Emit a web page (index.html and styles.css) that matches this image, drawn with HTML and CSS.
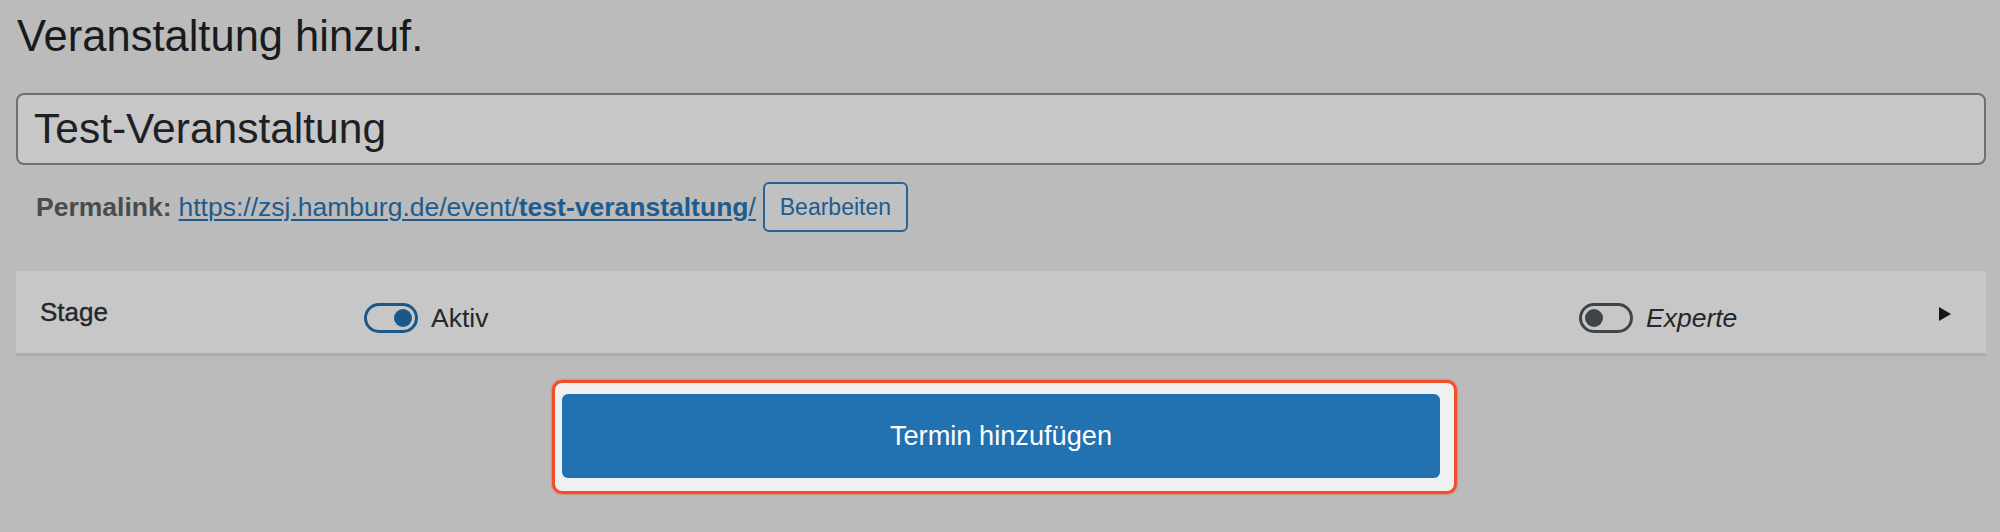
FILE: index.html
```html
<!DOCTYPE html>
<html lang="de">
<head>
<meta charset="utf-8">
<title>Veranstaltung hinzuf.</title>
<link rel="stylesheet" href="styles.css">
</head>
<body>
<div class="wrap">
  <h1 class="page-title">Veranstaltung hinzuf.</h1>
  <div class="title-field">Test-Veranstaltung</div>
  <div class="slug-box">
    <span class="slug-label">Permalink:</span>
    <a class="slug-link" href="#">https://zsj.hamburg.de/event/<strong>test-veranstaltung</strong>/</a>
    <button class="btn-small" type="button">Bearbeiten</button>
  </div>
  <div class="stage-panel">
    <div class="stage-label">Stage</div>
    <div class="toggle-group toggle-group--main">
      <span class="toggle toggle--on"><span class="knob"></span></span>
      <span class="toggle-text">Aktiv</span>
    </div>
    <div class="toggle-group toggle-group--expert">
      <span class="toggle toggle--off"><span class="knob"></span></span>
      <span class="toggle-text toggle-text--italic">Experte</span>
    </div>
    <span class="caret"></span>
  </div>
  <div class="actions">
    <div class="highlight">
      <button class="btn-primary" type="button">Termin hinzufügen</button>
    </div>
  </div>
</div>
</body>
</html>
```

FILE: styles.css
```css
html, body {
  margin: 0;
  padding: 0;
  background: #bbbbbb;
  height: 100%;
}

body {
  font-family: "Liberation Sans", Arial, sans-serif;
  color: #171b1e;
}

.wrap {
  padding: 8px 14px 0 16px;
}

.page-title {
  margin: 0 0 0 1px;
  font-size: 43.5px;
  line-height: 57px;
  font-weight: 400;
  color: #171b1e;
}

.title-field {
  margin-top: 28px;
  box-sizing: border-box;
  height: 72px;
  border: 2px solid #6d7073;
  border-radius: 8px;
  background: #c7c7c7;
  padding: 0 16px;
  display: flex;
  align-items: center;
  font-size: 42.5px;
  color: #1d2125;
}

.slug-box {
  margin-top: 17px;
  height: 50px;
  display: flex;
  align-items: center;
  padding-left: 20px;
  font-size: 26.5px;
  line-height: 30px;
}

.slug-label {
  font-weight: 700;
  color: #474c51;
  margin-right: 7px;
}

.slug-link {
  color: #1f5b8d;
  text-decoration: underline;
  text-decoration-thickness: 2px;
  text-underline-offset: 3px;
}

.slug-link strong {
  font-weight: 700;
}

.btn-small {
  margin-left: 7px;
  box-sizing: border-box;
  height: 50px;
  width: 145px;
  padding: 0;
  border: 2px solid #2b6293;
  border-radius: 6px;
  background: #c1c1c1;
  color: #1f5b8d;
  font-family: "Liberation Sans", Arial, sans-serif;
  font-size: 23px;
}

.stage-panel {
  margin-top: 39px;
  height: 82px;
  background: #c7c7c7;
  border-bottom: 3px solid #acacad;
  display: flex;
  align-items: center;
  padding: 0 35px 0 24px;
}

.stage-label {
  width: 324px;
  font-size: 26px;
  line-height: 30px;
  color: #22282c;
  -webkit-text-stroke: 0.4px #22282c;
}

.toggle-group {
  display: flex;
  align-items: center;
  gap: 13px;
  margin-top: 12px;
}

.toggle-group--main {
  flex: 1;
}

.toggle-group--expert {
  width: 360px;
}

.toggle {
  box-sizing: border-box;
  width: 54px;
  height: 30px;
  border: 3px solid;
  border-radius: 15px;
  display: flex;
  align-items: center;
  padding: 0 3px;
}

.toggle--on {
  border-color: #1b588a;
  justify-content: flex-end;
}

.toggle--off {
  border-color: #3e4449;
  justify-content: flex-start;
}

.knob {
  width: 18px;
  height: 18px;
  border-radius: 50%;
}

.toggle--on .knob {
  background: #1b588a;
}

.toggle--off .knob {
  background: #3e4449;
}

.toggle-text {
  font-size: 26.5px;
  line-height: 30px;
  color: #22282c;
}

.toggle-text--italic {
  font-style: italic;
}

.caret {
  width: 0;
  height: 0;
  border-left: 12px solid #171717;
  border-top: 7.5px solid transparent;
  border-bottom: 7.5px solid transparent;
  margin-top: 3px;
}

.actions {
  margin-top: 24px;
  display: flex;
  justify-content: center;
  padding-left: 7px;
}

.highlight {
  box-sizing: border-box;
  width: 905px;
  height: 114px;
  background: #f0f0f0;
  border: 3px solid #f24e2b;
  border-radius: 10px;
  box-shadow: 0 0 1px 1px rgba(242, 78, 43, 0.35);
  padding: 11px 14px 13px 7px;
}

.btn-primary {
  display: block;
  width: 100%;
  height: 84px;
  border: none;
  border-radius: 6px;
  background: #2271b1;
  color: #ffffff;
  font-family: "Liberation Sans", Arial, sans-serif;
  font-size: 27.2px;
  padding: 0;
}
```
